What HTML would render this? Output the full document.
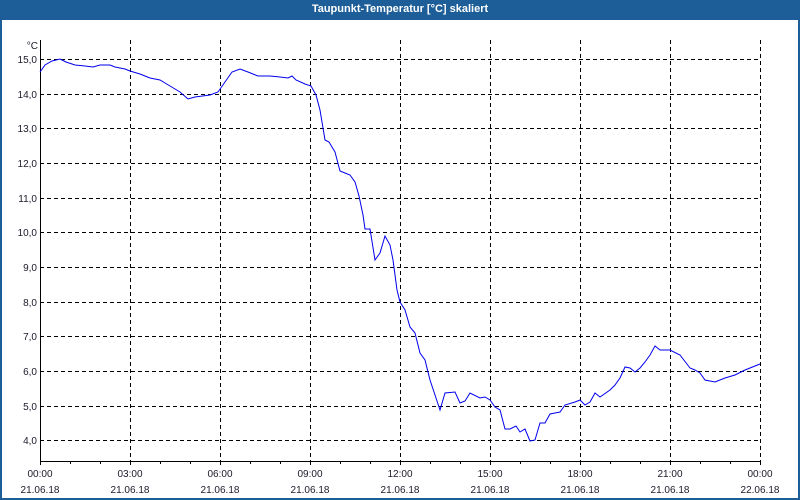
<!DOCTYPE html>
<html><head><meta charset="utf-8"><style>
html,body{margin:0;padding:0;}
body{width:800px;height:500px;position:relative;overflow:hidden;background:#1d5e98;font-family:"Liberation Sans",Tahoma,sans-serif;}
#title{position:absolute;left:0;top:0;width:800px;height:20px;line-height:19px;text-align:center;color:#fff;font-weight:bold;font-size:11px;}
#pane{position:absolute;left:2px;top:20px;width:796px;height:478px;background:#fff;}
</style></head><body>
<div id="title">Taupunkt-Temperatur [°C] skaliert</div>
<div id="pane"></div>
<svg width="800" height="500" style="position:absolute;left:0;top:0" font-family="Liberation Sans, sans-serif" font-size="10" fill="#1a1a2a">
<g stroke="#000" stroke-width="1" stroke-dasharray="4,3" shape-rendering="crispEdges">
<line x1="40" x2="760" y1="59.5" y2="59.5"/><line x1="40" x2="760" y1="94.5" y2="94.5"/><line x1="40" x2="760" y1="128.5" y2="128.5"/><line x1="40" x2="760" y1="163.5" y2="163.5"/><line x1="40" x2="760" y1="198.5" y2="198.5"/><line x1="40" x2="760" y1="232.5" y2="232.5"/><line x1="40" x2="760" y1="267.5" y2="267.5"/><line x1="40" x2="760" y1="302.5" y2="302.5"/><line x1="40" x2="760" y1="336.5" y2="336.5"/><line x1="40" x2="760" y1="371.5" y2="371.5"/><line x1="40" x2="760" y1="406.5" y2="406.5"/><line x1="40" x2="760" y1="440.5" y2="440.5"/>
<line y1="40" y2="461" x1="130.5" x2="130.5"/><line y1="40" y2="461" x1="220.5" x2="220.5"/><line y1="40" y2="461" x1="310.5" x2="310.5"/><line y1="40" y2="461" x1="400.5" x2="400.5"/><line y1="40" y2="461" x1="490.5" x2="490.5"/><line y1="40" y2="461" x1="580.5" x2="580.5"/><line y1="40" y2="461" x1="670.5" x2="670.5"/><line y1="40" y2="461" x1="760.5" x2="760.5"/>
</g>
<g stroke="#000" stroke-width="1" shape-rendering="crispEdges">
<line x1="40.5" x2="40.5" y1="40" y2="462"/><line x1="40" x2="761" y1="461.5" y2="461.5"/>
<path d="M40.5 461v4M70.5 461v3M100.5 461v3M130.5 461v4M160.5 461v3M190.5 461v3M220.5 461v4M250.5 461v3M280.5 461v3M310.5 461v4M340.5 461v3M370.5 461v3M400.5 461v4M430.5 461v3M460.5 461v3M490.5 461v4M520.5 461v3M550.5 461v3M580.5 461v4M610.5 461v3M640.5 461v3M670.5 461v4M700.5 461v3M730.5 461v3M760.5 461v4"/>
</g>
<polyline fill="none" stroke="#0000ee" stroke-width="1" points="40,72 45,65 52,61 60,59 66,62 75,65 85,66 93,67 100,65 110,65 115,67 125,69 130,71 140,74 150,78 160,80 170,86 180,92 188,99 195,97 210,95 218,92 225,82 232,72 240,69 248,72 258,76 270,76 280,77 288,78 292,76 296,80 305,84 311,86 316,95 320,110 325,140 329,142 335,152 340,171 345,173 350,175 355,182 359,196 363,215 365,229 370,229 375,260 380,253 385,236 390,245 393,260 397,290 400,302 405,310 410,327 415,333 420,353 425,360 430,380 435,395 440,410 445,393 455,392 460,403 465,401 470,393 480,398 485,397 490,400 495,407 500,410 505,429 510,429 516,426 520,432 525,429 530,441 535,440 540,423 545,423 550,414 555,413 560,412 565,405 575,402 580,400 585,405 590,402 595,393 600,397 610,390 615,385 620,378 625,367 630,368 635,372 640,368 645,362 650,355 655,346 660,350 665,350 670,350 680,355 690,368 695,370 700,373 705,380 715,382 725,378 735,375 745,370 755,366 760,364"/>
<g text-anchor="end">
<text x="38" y="49">°C</text>
<text x="37" y="63">15,0</text><text x="37" y="98">14,0</text><text x="37" y="132">13,0</text><text x="37" y="167">12,0</text><text x="37" y="202">11,0</text><text x="37" y="236">10,0</text><text x="37" y="271">9,0</text><text x="37" y="306">8,0</text><text x="37" y="340">7,0</text><text x="37" y="375">6,0</text><text x="37" y="410">5,0</text><text x="37" y="444">4,0</text>
</g>
<g text-anchor="middle">
<text x="40" y="477">00:00</text><text x="130" y="477">03:00</text><text x="220" y="477">06:00</text><text x="310" y="477">09:00</text><text x="400" y="477">12:00</text><text x="490" y="477">15:00</text><text x="580" y="477">18:00</text><text x="670" y="477">21:00</text><text x="760" y="477">00:00</text>
<text x="40" y="493">21.06.18</text><text x="130" y="493">21.06.18</text><text x="220" y="493">21.06.18</text><text x="310" y="493">21.06.18</text><text x="400" y="493">21.06.18</text><text x="490" y="493">21.06.18</text><text x="580" y="493">21.06.18</text><text x="670" y="493">21.06.18</text><text x="760" y="493">22.06.18</text>
</g>
</svg>
</body></html>
